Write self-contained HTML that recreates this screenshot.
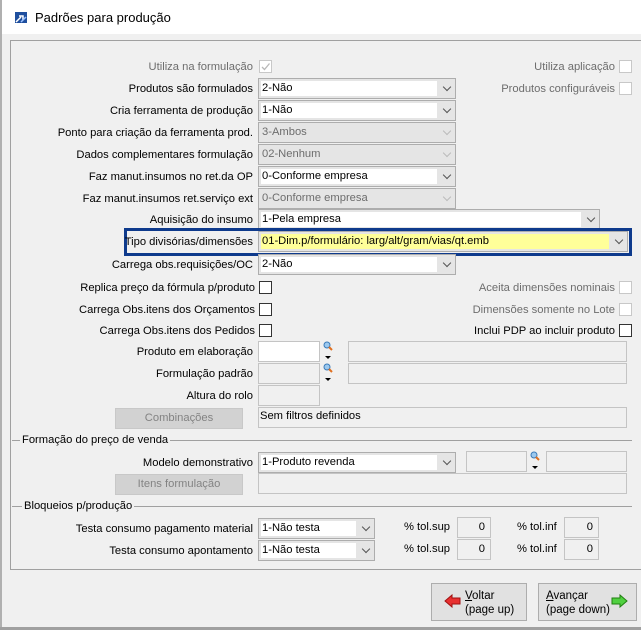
<!DOCTYPE html>
<html><head><meta charset="utf-8"><style>
*{box-sizing:border-box;margin:0;padding:0}
body{width:641px;height:630px;overflow:hidden;background:#f0f0f0;font-family:"Liberation Sans",sans-serif;font-size:11.2px;color:#000;position:relative}
.a{position:absolute;white-space:nowrap}
.l{position:absolute;text-align:right;white-space:nowrap;line-height:16px}
.d{color:#6d6d6d}
.cb{position:absolute;height:21px;border:1px solid #adadad;background:#e5e5e5}
.cb .t{position:absolute;left:2px;top:2px;bottom:2px;right:18px;background:#fff;line-height:15px;padding-left:1px}
.cb.dis{background:#e5e5e5;color:#6d6d6d}
.cb.dis .t{background:#e5e5e5}
.cb .ar{position:absolute;right:5px;top:5px;width:6px;height:6px;border-right:1px solid #555;border-bottom:1px solid #555;transform:rotate(45deg)}
.cb.dis .ar{border-color:#bbb}
.ck{position:absolute;width:13px;height:13px;border:1px solid #333;background:#fff}
.ck.dis{border-color:#c8c8c8}
.in{position:absolute;height:21px;border:1px solid #c4c4c4;background:#f0f0f0}
.btn{position:absolute;height:21px;border:1px solid #c8c8c8;background:#d2d2d2;color:#838383;text-align:center;line-height:19px}
.lp{position:absolute;width:10px;height:20px}
</style></head><body>
<div class="a" style="left:0;top:0;width:641px;height:34px;background:#fff"></div>
<div class="a" style="left:0;top:0;width:2px;height:630px;background:#b0b0b0"></div>
<div class="a" style="left:0;top:627px;width:641px;height:3px;background:#a0a0a0"></div>
<svg class="a" style="left:15px;top:12px" width="12" height="11"><rect width="12" height="11" fill="#1f4f9e"/><path d="M1 10 L6 5 M4 4 L8 4 L8 8" stroke="#fff" stroke-width="1.5" fill="none"/><path d="M6 10 L11 5" stroke="#9cc2ff" stroke-width="1.5"/></svg>
<div class="a" style="left:35px;top:10px;font-size:13px">Padrões para produção</div>
<div class="a" style="left:10px;top:40px;width:631px;height:530px;border:1px solid #a0a0a0;border-right:none"></div>

<div class="l d" style="right:388px;top:59px">Utiliza na formulação</div>
<div class="ck dis" style="left:259px;top:60px"><svg width="11" height="11" style="position:absolute;left:0;top:0"><path d="M2 6 L4.5 8.5 L9.5 2.5" stroke="#b8b8b8" stroke-width="1.3" fill="none"/></svg></div>
<div class="l d" style="right:26px;top:59px">Utiliza aplicação</div><div class="ck dis" style="left:619px;top:60px"></div>
<div class="l d" style="right:26px;top:81px">Produtos configuráveis</div><div class="ck dis" style="left:619px;top:82px"></div>

<div class="l" style="right:388px;top:81px">Produtos são formulados</div>
<div class="cb" style="left:258px;top:78px;width:198px"><div class="t">2-Não</div><div class="ar"></div></div>
<div class="l" style="right:388px;top:103px">Cria ferramenta de produção</div>
<div class="cb" style="left:258px;top:100px;width:198px"><div class="t">1-Não</div><div class="ar"></div></div>
<div class="l" style="right:388px;top:125px">Ponto para criação da ferramenta prod.</div>
<div class="cb dis" style="left:258px;top:122px;width:198px"><div class="t">3-Ambos</div><div class="ar"></div></div>
<div class="l" style="right:388px;top:147px">Dados complementares formulação</div>
<div class="cb dis" style="left:258px;top:144px;width:198px"><div class="t">02-Nenhum</div><div class="ar"></div></div>
<div class="l" style="right:388px;top:169px">Faz manut.insumos no ret.da OP</div>
<div class="cb" style="left:258px;top:166px;width:198px"><div class="t">0-Conforme empresa</div><div class="ar"></div></div>
<div class="l" style="right:388px;top:191px">Faz manut.insumos ret.serviço ext</div>
<div class="cb dis" style="left:258px;top:188px;width:198px"><div class="t">0-Conforme empresa</div><div class="ar"></div></div>
<div class="l" style="right:388px;top:212px">Aquisição do insumo</div>
<div class="cb" style="left:258px;top:209px;width:342px"><div class="t">1-Pela empresa</div><div class="ar"></div></div>

<div class="a" style="left:124px;top:228px;width:508px;height:28px;border:3px solid #0e3a8c"></div>
<div class="l" style="right:388px;top:234px">Tipo divisórias/dimensões</div>
<div class="cb" style="left:258px;top:231px;width:370px"><div class="t" style="background:#ffff99">01-Dim.p/formulário: larg/alt/gram/vias/qt.emb</div><div class="ar"></div></div>

<div class="l" style="right:388px;top:257px">Carrega obs.requisições/OC</div>
<div class="cb" style="left:258px;top:254px;width:198px"><div class="t">2-Não</div><div class="ar"></div></div>

<div class="l" style="right:386px;top:280px">Replica preço da fórmula p/produto</div><div class="ck" style="left:259px;top:281px"></div>
<div class="l" style="right:386px;top:302px">Carrega Obs.itens dos Orçamentos</div><div class="ck" style="left:259px;top:303px"></div>
<div class="l" style="right:386px;top:323px">Carrega Obs.itens dos Pedidos</div><div class="ck" style="left:259px;top:324px"></div>
<div class="l d" style="right:26px;top:280px">Aceita dimensões nominais</div><div class="ck dis" style="left:619px;top:281px"></div>
<div class="l d" style="right:26px;top:302px">Dimensões somente no Lote</div><div class="ck dis" style="left:619px;top:303px"></div>
<div class="l" style="right:26px;top:323px">Inclui PDP ao incluir produto</div><div class="ck" style="left:619px;top:324px"></div>

<div class="l" style="right:388px;top:344px">Produto em elaboração</div>
<div class="in" style="left:258px;top:341px;width:62px;background:#fff"></div>
<svg class="lp" style="left:323px;top:341px"><circle cx="4" cy="4" r="3" fill="#9cc9ef" stroke="#3a7ab8"/><path d="M6 6 L9 9" stroke="#e07020" stroke-width="2"/><path d="M2 15 L8 15 L5 18Z" fill="#000"/></svg>
<div class="in" style="left:348px;top:341px;width:279px"></div>
<div class="l" style="right:388px;top:366px">Formulação padrão</div>
<div class="in" style="left:258px;top:363px;width:62px"></div>
<svg class="lp" style="left:323px;top:363px"><circle cx="4" cy="4" r="3" fill="#9cc9ef" stroke="#3a7ab8"/><path d="M6 6 L9 9" stroke="#e07020" stroke-width="2"/><path d="M2 15 L8 15 L5 18Z" fill="#000"/></svg>
<div class="in" style="left:348px;top:363px;width:279px"></div>
<div class="l" style="right:388px;top:388px">Altura do rolo</div>
<div class="in" style="left:258px;top:385px;width:62px"></div>
<div class="btn" style="left:115px;top:408px;width:128px">Combinações</div>
<div class="in" style="left:258px;top:407px;width:369px;padding-left:1px;line-height:16px">Sem filtros definidos</div>

<div class="a" style="left:12px;top:440px;width:620px;height:1px;background:#a0a0a0"></div>
<div class="a" style="left:20px;top:432px;background:#f0f0f0;padding:0 2px;line-height:16px">Formação do preço de venda</div>
<div class="l" style="right:388px;top:455px">Modelo demonstrativo</div>
<div class="cb" style="left:258px;top:452px;width:198px"><div class="t">1-Produto revenda</div><div class="ar"></div></div>
<div class="in" style="left:466px;top:451px;width:61px"></div>
<svg class="lp" style="left:530px;top:451px"><circle cx="4" cy="4" r="3" fill="#9cc9ef" stroke="#3a7ab8"/><path d="M6 6 L9 9" stroke="#e07020" stroke-width="2"/><path d="M2 15 L8 15 L5 18Z" fill="#000"/></svg>
<div class="in" style="left:546px;top:451px;width:81px"></div>
<div class="btn" style="left:115px;top:474px;width:128px">Itens formulação</div>
<div class="in" style="left:258px;top:473px;width:369px"></div>

<div class="a" style="left:12px;top:506px;width:620px;height:1px;background:#a0a0a0"></div>
<div class="a" style="left:22px;top:498px;background:#f0f0f0;padding:0 2px;line-height:16px">Bloqueios p/produção</div>
<div class="l" style="right:388px;top:521px">Testa consumo pagamento material</div>
<div class="cb" style="left:258px;top:518px;width:117px"><div class="t">1-Não testa</div><div class="ar"></div></div>
<div class="l" style="right:388px;top:543px">Testa consumo apontamento</div>
<div class="cb" style="left:258px;top:540px;width:117px"><div class="t">1-Não testa</div><div class="ar"></div></div>
<div class="a" style="left:404px;top:521px">% tol.sup</div>
<div class="in" style="left:457px;top:517px;width:34px;text-align:right;padding-right:5px;line-height:18px">0</div>
<div class="a" style="left:517px;top:521px">% tol.inf</div>
<div class="in" style="left:564px;top:517px;width:35px;text-align:right;padding-right:5px;line-height:18px">0</div>
<div class="a" style="left:404px;top:543px">% tol.sup</div>
<div class="in" style="left:457px;top:539px;width:34px;text-align:right;padding-right:5px;line-height:18px">0</div>
<div class="a" style="left:517px;top:543px">% tol.inf</div>
<div class="in" style="left:564px;top:539px;width:35px;text-align:right;padding-right:5px;line-height:18px">0</div>

<div class="a" style="left:431px;top:583px;width:96px;height:38px;border:1px solid #adadad;background:#e1e1e1"></div>
<svg class="a" style="left:444px;top:594px" width="18" height="14"><path d="M1 7 L8 1 L8 4 L16 4 L16 10 L8 10 L8 13Z" fill="#e83030" stroke="#a01010"/></svg>
<div class="a" style="left:465px;top:589px;line-height:14px;font-size:11.5px"><u>V</u>oltar<br>(page up)</div>
<div class="a" style="left:538px;top:583px;width:99px;height:38px;border:1px solid #adadad;background:#e1e1e1"></div>
<div class="a" style="left:546px;top:589px;line-height:14px;font-size:11.5px"><u>A</u>vançar<br>(page down)</div>
<svg class="a" style="left:610px;top:594px" width="18" height="14"><path d="M17 7 L10 1 L10 4 L2 4 L2 10 L10 10 L10 13Z" fill="#50d040" stroke="#208010"/></svg>
</body></html>
